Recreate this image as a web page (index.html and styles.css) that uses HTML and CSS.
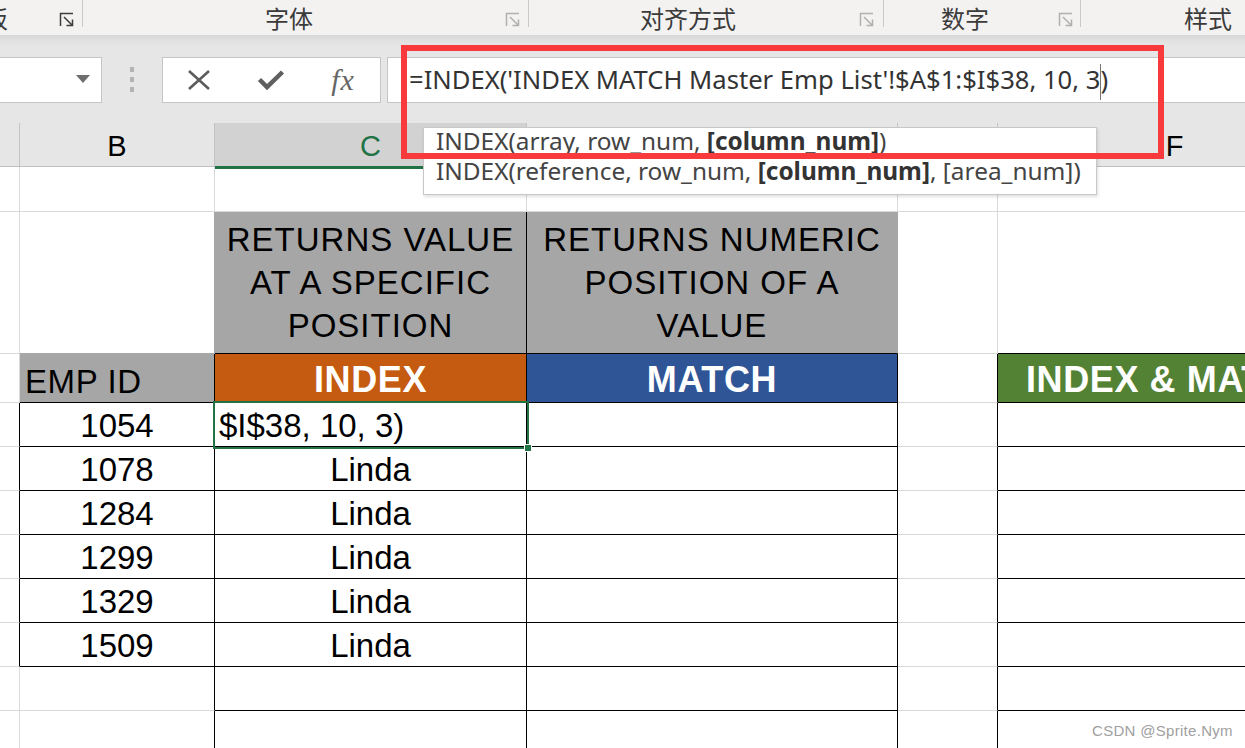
FILE: index.html
```html
<!DOCTYPE html>
<html lang="zh">
<head>
<meta charset="utf-8">
<title>INDEX MATCH</title>
<link rel="stylesheet" href="styles.css">
</head>
<body>
<div class="ribbon">
  <div class="grp g1"><span class="glabel">板</span><svg class="launch dark" width="16" height="16" viewBox="0 0 16 16"><path d="M1.5 14V1.5H14" /><path d="M5 5L13.5 13.5M7.5 13.5h6V7.5" /></svg></div>
  <i class="sep"></i>
  <div class="grp g2"><span class="glabel">字体</span><svg class="launch" width="16" height="16" viewBox="0 0 16 16"><path d="M1.5 14V1.5H14" /><path d="M5 5L13.5 13.5M7.5 13.5h6V7.5" /></svg></div>
  <i class="sep"></i>
  <div class="grp g3"><span class="glabel">对齐方式</span><svg class="launch" width="16" height="16" viewBox="0 0 16 16"><path d="M1.5 14V1.5H14" /><path d="M5 5L13.5 13.5M7.5 13.5h6V7.5" /></svg></div>
  <i class="sep"></i>
  <div class="grp g4"><span class="glabel">数字</span><svg class="launch" width="16" height="16" viewBox="0 0 16 16"><path d="M1.5 14V1.5H14" /><path d="M5 5L13.5 13.5M7.5 13.5h6V7.5" /></svg></div>
  <i class="sep"></i>
  <div class="grp g5"><span class="glabel">样式</span></div>
</div>

<div class="fbar">
  <div class="namebox"><svg class="tri" width="14" height="8" viewBox="0 0 14 8"><polygon points="0,0 14,0 7,8" /></svg></div>
  <div class="grip"><svg width="6" height="26" viewBox="0 0 6 26"><rect x="1" y="0" width="4" height="5"/><rect x="1" y="10" width="4" height="5"/><rect x="1" y="20" width="4" height="5"/></svg></div>
  <div class="fxbox">
    <span class="fbtn"><svg width="26" height="20" viewBox="0 0 26 20"><path d="M3 1L23 19M23 1L3 19" /></svg></span>
    <span class="fbtn"><svg width="28" height="22" viewBox="0 0 28 22"><path d="M2.5 10.5L10 18L25.5 3" /></svg></span>
    <span class="fbtn fx">fx</span>
  </div>
  <div class="formula">=INDEX('INDEX MATCH Master Emp List'!$A$1:$I$38, 10, 3<span class="caret"></span>)</div>
</div>

<div class="colhdr">
  <div class="ch ca"></div>
  <div class="ch cb">B</div>
  <div class="ch cc on">C</div>
  <div class="ch cd">D</div>
  <div class="ch ce">E</div>
  <div class="ch cf">F</div>
</div>

<div class="sheet">
  <!-- row 1 -->
  <div class="c"></div><div class="c"></div><div class="c"></div><div class="c"></div><div class="c"></div><div class="c"></div>
  <!-- row 2 -->
  <div class="c"></div>
  <div class="c gr-r gr-b"></div>
  <div class="c gray k-r k-b desc">RETURNS VALUE<br>AT A SPECIFIC<br>POSITION</div>
  <div class="c gray k-b gr-r desc">RETURNS NUMERIC<br>POSITION OF A<br>VALUE</div>
  <div class="c"></div>
  <div class="c k-b"></div>
  <!-- row 3 -->
  <div class="c"></div>
  <div class="c gray k-r k-b left">EMP ID</div>
  <div class="c orange k-r k-b head">INDEX</div>
  <div class="c blue k-r k-b head">MATCH</div>
  <div class="c k-r"></div>
  <div class="c green k-b head left2">INDEX &amp; MATCH</div>
  <!-- row 4 -->
  <div class="c k-r"></div>
  <div class="c k-r k-b num">1054</div>
  <div class="c k-r k-b left3">$I$38, 10, 3)</div>
  <div class="c k-r k-b"></div>
  <div class="c k-r"></div>
  <div class="c k-b"></div>
  <!-- row 5 -->
  <div class="c k-r"></div>
  <div class="c k-r k-b num">1078</div>
  <div class="c k-r k-b num">Linda</div>
  <div class="c k-r k-b"></div>
  <div class="c k-r"></div>
  <div class="c k-b"></div>
  <!-- row 6 -->
  <div class="c k-r"></div>
  <div class="c k-r k-b num">1284</div>
  <div class="c k-r k-b num">Linda</div>
  <div class="c k-r k-b"></div>
  <div class="c k-r"></div>
  <div class="c k-b"></div>
  <!-- row 7 -->
  <div class="c k-r"></div>
  <div class="c k-r k-b num">1299</div>
  <div class="c k-r k-b num">Linda</div>
  <div class="c k-r k-b"></div>
  <div class="c k-r"></div>
  <div class="c k-b"></div>
  <!-- row 8 -->
  <div class="c k-r"></div>
  <div class="c k-r k-b num">1329</div>
  <div class="c k-r k-b num">Linda</div>
  <div class="c k-r k-b"></div>
  <div class="c k-r"></div>
  <div class="c k-b"></div>
  <!-- row 9 -->
  <div class="c k-r"></div>
  <div class="c k-r k-b num">1509</div>
  <div class="c k-r k-b num">Linda</div>
  <div class="c k-r k-b"></div>
  <div class="c k-r"></div>
  <div class="c k-b"></div>
  <!-- row 10 -->
  <div class="c"></div>
  <div class="c k-r"></div>
  <div class="c k-r k-b"></div>
  <div class="c k-r k-b"></div>
  <div class="c k-r"></div>
  <div class="c k-b"></div>
  <!-- row 11 -->
  <div class="c"></div>
  <div class="c k-r"></div>
  <div class="c k-r k-b"></div>
  <div class="c k-r k-b"></div>
  <div class="c k-r"></div>
  <div class="c k-b"></div>
</div>

<div class="sel"><i class="handle"></i></div>

<div class="tip">
  <div class="tline">INDEX(array, row_num, <b>[column_num]</b>)</div>
  <div class="tline">INDEX(reference, row_num, <b>[column_num]</b>, [area_num])</div>
</div>

<div class="annot"></div>

<div class="wm">CSDN @Sprite.Nym</div>
</body>
</html>
```

FILE: styles.css
```css
* { box-sizing: border-box; }
html, body { margin: 0; padding: 0; }
body {
  width: 1245px;
  height: 748px;
  overflow: hidden;
  position: relative;
  background: #ffffff;
  font-family: "Liberation Sans", Arial, sans-serif;
}

/* ---------- ribbon ---------- */
.ribbon {
  display: flex;
  height: 35px;
  background: #f3f2f1;
  overflow: hidden;
  white-space: nowrap;
}
.grp {
  display: flex;
  align-items: center;
  height: 100%;
  flex: none;
}
.glabel {
  font-family: "Noto Sans CJK SC", "Noto Sans", sans-serif;
  font-size: 24px;
  line-height: 30px;
  color: #3b3b3b;
  margin-top: 1px;
}
.launch {
  margin-left: auto;
  margin-top: 4px;
  fill: none;
  stroke: #b0b0b0;
  stroke-width: 1.5;
}
.launch.dark { stroke: #3c3c3c; }
.sep {
  flex: none;
  width: 1px;
  height: 27px;
  background: #c9c9c9;
}
.g1 { width: 82px; padding-right: 7px; }
.g1 .glabel { margin-left: -16px; }
.g2 { width: 445px; padding-right: 7px; }
.g2 .glabel { margin-left: 182px; }
.g3 { width: 354px; padding-right: 8px; }
.g3 .glabel { margin-left: 111px; }
.g4 { width: 196px; padding-right: 6px; }
.g4 .glabel { margin-left: 57px; }
.g5 { flex: 1; }
.g5 .glabel { margin-left: 103px; }

/* ---------- formula bar ---------- */
.fbar {
  height: 88px;
  padding-top: 22px;
  display: flex;
  align-items: flex-start;
  background: linear-gradient(#d6d6d6 0px, #e2e2e2 6px, #e6e6e6 11px, #e6e6e6 100%);
}
.namebox {
  flex: none;
  width: 103px;
  height: 46px;
  margin-left: -1px;
  background: #fff;
  border: 1px solid #c6c6c6;
  display: flex;
  align-items: center;
  justify-content: flex-end;
  padding-right: 11px;
}
.tri { fill: #6e6e6e; margin-top: -2px; }
.grip {
  flex: none;
  width: 60px;
  height: 46px;
  display: flex;
  align-items: center;
  justify-content: center;
}
.grip svg { fill: #b3b3b3; margin-left: -1px; }
.fxbox {
  flex: none;
  width: 219px;
  height: 46px;
  background: #fff;
  border: 1px solid #c6c6c6;
  display: flex;
  align-items: center;
}
.fbtn {
  width: 72px;
  display: flex;
  justify-content: center;
  align-items: center;
}
.fbtn svg { fill: none; stroke: #5c5c5c; }
.fbtn:first-child svg { stroke-width: 2.6; }
.fbtn:nth-child(2) svg { stroke-width: 4.5; stroke: #606060; }
.fbtn.fx {
  font-family: "Liberation Serif", "DejaVu Serif", serif;
  font-style: italic;
  font-size: 30px;
  line-height: 30px;
  color: #666;
  letter-spacing: 1px;
}
.formula {
  flex: none;
  width: 870px;
  height: 46px;
  margin-left: 6px;
  background: #fff;
  border: 1px solid #c6c6c6;
  border-right: none;
  padding-left: 21px;
  font-family: "Noto Sans", "Open Sans", sans-serif;
  font-size: 25.6px;
  line-height: 44px;
  color: #333;
  white-space: nowrap;
}
.caret {
  display: inline-block;
  width: 1px;
  height: 36px;
  background: #777;
  vertical-align: middle;
  margin-right: -1px;
}

/* ---------- column headers ---------- */
.colhdr {
  display: flex;
  height: 44px;
  background: #e6e6e6;
  border-bottom: 1px solid #bfbfbf;
  white-space: nowrap;
}
.ch {
  flex: none;
  height: 100%;
  border-right: 1px solid #c3c3c3;
  display: flex;
  align-items: center;
  justify-content: center;
  font-size: 29px;
  color: #000;
  padding-top: 3px;
}
.ch.on {
  background: #d2d2d2;
  color: #217346;
  border-bottom: 3px solid #217346;
  height: 46px;
  margin-bottom: -2px;
}
.ca { width: 20px; }
.cb { width: 195px; }
.cc { width: 312px; }
.cd { width: 371px; }
.ce { width: 100px; }
.cf { width: 354px; }

/* ---------- sheet ---------- */
.sheet {
  display: grid;
  grid-template-columns: 20px 195px 312px 371px 100px 354px;
  grid-template-rows: 45px 142px 49px repeat(8, 44px);
}
.c {
  border-right: 1px solid #d9d9d9;
  border-bottom: 1px solid #d9d9d9;
  font-size: 33px;
  line-height: 36px;
  color: #000;
  display: flex;
  align-items: flex-end;
  justify-content: center;
  white-space: nowrap;
  overflow: visible;
  min-width: 0;
  padding-bottom: 2px;
}
.k-r { border-right-color: #000; }
.k-b { border-bottom-color: #000; }
.gr-r { border-right-color: #a6a6a6; }
.gr-b { border-bottom-color: #a6a6a6; }
.gray { background: #a6a6a6; }
.orange { background: #c55a11; }
.blue { background: #2f5597; }
.green { background: #548235; }
.desc {
  align-items: center;
  text-align: center;
  line-height: 43px;
  padding: 0;
  letter-spacing: 1px;
}
.head {
  color: #fff;
  font-weight: bold;
  font-size: 36px;
  letter-spacing: 0.6px;
  padding-bottom: 4px;
}
.left { justify-content: flex-start; padding-left: 5px; letter-spacing: 0.6px; }
.left2 { justify-content: flex-start; padding-left: 28px; overflow: hidden; }
.left3 { justify-content: flex-start; padding-left: 4px; }

/* ---------- overlays ---------- */
.sel {
  position: absolute;
  left: 213px;
  top: 401px;
  width: 316px;
  height: 48px;
  border: 2px solid #217346;
}
.handle {
  position: absolute;
  right: -5px;
  bottom: -5px;
  width: 8px;
  height: 8px;
  background: #217346;
  border: 1px solid #fff;
}
.tip {
  position: absolute;
  left: 423px;
  top: 127px;
  width: 674px;
  height: 68px;
  background: #fff;
  border: 1px solid #c8c8c8;
  box-shadow: 1px 2px 3px rgba(0,0,0,0.12);
  padding: 0 0 0 12px;
  font-family: "Noto Sans", "Open Sans", sans-serif;
  font-size: 24.4px;
  color: #444;
  white-space: nowrap;
}
.tline { height: 30px; line-height: 30px; }
.tline:first-child { margin-top: -2px; }
.tip b { color: #333; }
.annot {
  position: absolute;
  left: 401px;
  top: 45px;
  width: 763px;
  height: 114px;
  border: 6px solid #f83a3c;
}
.wm {
  position: absolute;
  left: 1092px;
  top: 722px;
  font-size: 15px;
  line-height: 18px;
  color: #a0a0a0;
  letter-spacing: 0.3px;
}
```
